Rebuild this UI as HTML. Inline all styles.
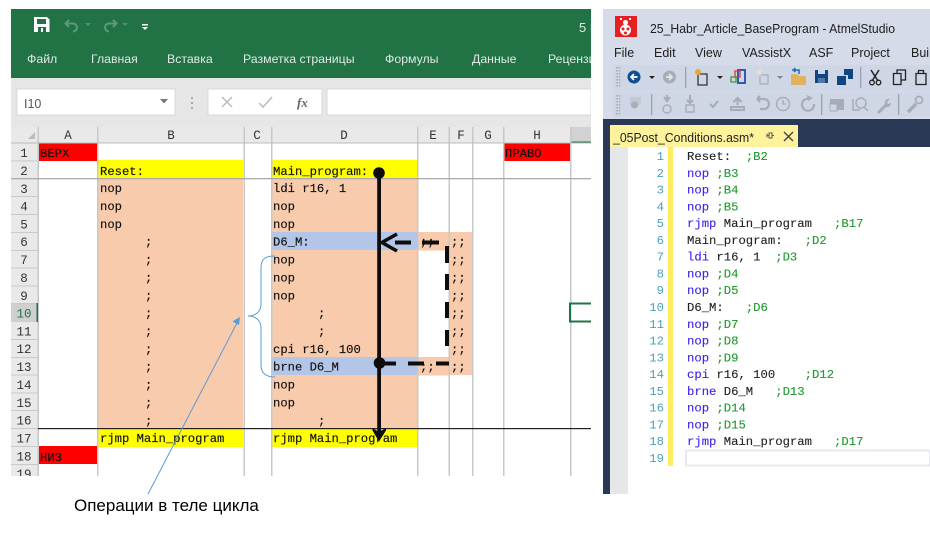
<!DOCTYPE html>
<html><head><meta charset="utf-8"><style>
html,body{margin:0;padding:0;background:#fff;width:930px;height:533px;overflow:hidden}
svg{display:block}
text{white-space:pre}
.m{font-family:"Liberation Mono",monospace;font-size:12.2px;fill:#111;stroke:#111;stroke-width:.15px}
.h{font-family:"Liberation Mono",monospace;font-size:12.5px;fill:#333;text-anchor:middle}
.tab{font-family:"Liberation Sans",sans-serif;font-size:12.3px;fill:#dfeae4}
.menu{font-family:"Liberation Sans",sans-serif;font-size:12.5px;fill:#1e1e1e}
.c{font-family:"Liberation Mono",monospace;font-size:12.25px;fill:#222;stroke:#222;stroke-width:.12px}
.k{fill:#3a22f0;stroke:#3a22f0}.g{fill:#1e9a2e;stroke:#1e9a2e}
.n{font-family:"Liberation Mono",monospace;font-size:12.25px;fill:#4a9fc0;text-anchor:end}
</style></head><body>
<svg width="930" height="533" viewBox="0 0 930 533" xmlns="http://www.w3.org/2000/svg">
<rect width="930" height="533" fill="#fff"/>
<!-- Excel chrome -->
<rect x="11" y="9" width="580" height="69" fill="#217346"/>
<rect x="11" y="78" width="580" height="49" fill="#e6e6e6"/>
<path d="M34 17h13l2.500 2.500v12.500h-15.500z" fill="#fff"/>
<rect x="37" y="19" width="9" height="5" fill="#217346"/><rect x="38" y="27" width="8" height="5" fill="#217346"/><rect x="41" y="28" width="2" height="4" fill="#fff"/>
<path d="M69 21l-3.500 3.500 3.500 3.500M66 24.500h7a4 4 0 0 1 0 8" fill="none" stroke="#5b9a7b" stroke-width="2" transform="translate(0,-1)"/>
<path d="M85 23l3 3 3-3z" fill="#4f9272"/>
<path d="M113 20l3.500 3.500-3.500 3.500M116 23.500h-7a4 4 0 0 0 0 8" fill="none" stroke="#5b9a7b" stroke-width="2"/>
<path d="M122 23l3 3 3-3z" fill="#4f9272"/>
<rect x="142" y="24" width="6" height="1.500" fill="#fff"/><path d="M142 27h6l-3 3z" fill="#fff"/>
<text class="tab" x="579" y="32" style="font-size:13px">5 П</text>
<text class="tab" x="27" y="63">Файл</text>
<text class="tab" x="91" y="63">Главная</text>
<text class="tab" x="167" y="63">Вставка</text>
<text class="tab" x="243" y="63">Разметка страницы</text>
<text class="tab" x="385" y="63">Формулы</text>
<text class="tab" x="472" y="63">Данные</text>
<text class="tab" x="548" y="63">Рецензирование</text>
<rect x="17" y="89" width="158" height="26" fill="#fff" stroke="#d8d8d8"/>
<text x="24" y="108" style="font-family:'Liberation Sans',sans-serif;font-size:12.5px;fill:#555">I10</text>
<path d="M160 99h8l-4 4.500z" fill="#777"/>
<rect x="191" y="97" width="2" height="2" fill="#aaa"/><rect x="191" y="102" width="2" height="2" fill="#aaa"/><rect x="191" y="107" width="2" height="2" fill="#aaa"/>
<rect x="208" y="89" width="114" height="26" fill="#fff" stroke="#d8d8d8"/>
<path d="M222 97l10 10M232 97l-10 10" stroke="#bbb" stroke-width="1.500" fill="none"/>
<path d="M259 103l4 4 9-10" stroke="#bbb" stroke-width="1.500" fill="none"/>
<text x="297" y="107" style="font-family:'Liberation Serif',serif;font-style:italic;font-weight:bold;font-size:13px;fill:#666">fx</text>
<rect x="327" y="89" width="264" height="26" fill="#fff" stroke="#d8d8d8"/>
<!-- Column header -->
<rect x="11" y="127" width="580" height="16" fill="#e9e9e9"/>
<rect x="570" y="127" width="21" height="15" fill="#d2d2d2"/><rect x="570" y="141.500" width="21" height="1.500" fill="#217346"/>
<path d="M35 139v-7l-7 7z" fill="#bdbdbd"/>
<rect x="11" y="143" width="27" height="333" fill="#e9e9e9"/>
<rect x="38" y="143" width="553" height="333" fill="#fff"/>
<!-- Fills -->
<rect x="38" y="143" width="59" height="18" fill="#f00"/>
<rect x="503.500" y="143" width="66.500" height="18" fill="#f00"/>
<rect x="38" y="446" width="59" height="18" fill="#f00"/>
<rect x="98" y="160" width="145" height="18.500" fill="#ff0"/>
<rect x="271.500" y="160" width="145.500" height="18.500" fill="#ff0"/>
<rect x="98" y="179" width="145" height="249" fill="#f8cbad"/>
<rect x="271.500" y="179" width="145.500" height="249" fill="#f8cbad"/>
<rect x="449" y="232" width="23" height="143" fill="#f8cbad"/>
<rect x="417.500" y="232" width="31.500" height="18.500" fill="#f8cbad"/>
<rect x="417.500" y="357" width="31.500" height="18.500" fill="#f8cbad"/>
<rect x="271.500" y="232" width="145.500" height="18" fill="#b4c6e7"/>
<rect x="271.500" y="357" width="145.500" height="18" fill="#b4c6e7"/>
<rect x="98" y="429" width="145" height="18" fill="#ff0"/>
<rect x="271.500" y="429" width="145.500" height="18" fill="#ff0"/>
<!-- Grid -->
<g fill="#c8c8c8">
<rect x="97" y="127" width="1.500" height="349"/><rect x="243.500" y="127" width="1.500" height="349"/><rect x="271" y="127" width="1.500" height="349"/><rect x="417" y="127" width="1.500" height="349"/><rect x="448.500" y="127" width="1.500" height="349"/><rect x="472" y="127" width="1.500" height="349"/><rect x="503" y="127" width="1.500" height="349"/><rect x="570" y="127" width="1.500" height="349"/>
<rect x="37.500" y="127" width="1.500" height="349"/>
</g>
<rect x="11" y="142.500" width="580" height="1" fill="#bbb"/>
<g fill="#c9c9c9"><rect x="11" y="160.400" width="27" height="1"/><rect x="11" y="196" width="27" height="1"/><rect x="11" y="214" width="27" height="1"/><rect x="11" y="232" width="27" height="1"/><rect x="11" y="250" width="27" height="1"/><rect x="11" y="267.500" width="27" height="1"/><rect x="11" y="285.500" width="27" height="1"/><rect x="11" y="303" width="27" height="1"/><rect x="11" y="321" width="27" height="1"/><rect x="11" y="339" width="27" height="1"/><rect x="11" y="357" width="27" height="1"/><rect x="11" y="374.500" width="27" height="1"/><rect x="11" y="392.500" width="27" height="1"/><rect x="11" y="410" width="27" height="1"/><rect x="11" y="446" width="27" height="1"/><rect x="11" y="464" width="27" height="1"/></g>
<rect x="11" y="178" width="580" height="1.300" fill="#aaa"/>
<rect x="38" y="428" width="553" height="1.200" fill="#222"/><rect x="11" y="428" width="27" height="1" fill="#c9c9c9"/>
<rect x="11" y="304" width="27" height="18" fill="#cfcfcf"/><rect x="36.500" y="303" width="1.500" height="19" fill="#217346"/>
<rect x="570" y="303.500" width="23" height="18" fill="none" stroke="#217346" stroke-width="2"/>
<!-- Headers text -->
<text class="h" x="68" y="139">A</text><text class="h" x="171" y="139">B</text><text class="h" x="257" y="139">C</text><text class="h" x="344" y="139">D</text><text class="h" x="433" y="139">E</text><text class="h" x="461" y="139">F</text><text class="h" x="488" y="139">G</text><text class="h" x="537" y="139">H</text>
<text class="h" x="24" y="157">1</text><text class="h" x="24" y="175">2</text><text class="h" x="24" y="193">3</text><text class="h" x="24" y="210.500">4</text><text class="h" x="24" y="228.500">5</text><text class="h" x="24" y="246">6</text><text class="h" x="24" y="264">7</text><text class="h" x="24" y="282">8</text><text class="h" x="24" y="300">9</text><text class="h" x="24" y="317.500" style="fill:#217346">10</text><text class="h" x="24" y="335.500">11</text><text class="h" x="24" y="353">12</text><text class="h" x="24" y="371">13</text><text class="h" x="24" y="389">14</text><text class="h" x="24" y="407">15</text><text class="h" x="24" y="424.500">16</text><text class="h" x="24" y="442.500">17</text><text class="h" x="24" y="460.500">18</text><text class="h" x="24" y="478">19</text>
<!-- Cells -->
<text class="m" x="40" y="157">ВЕРХ</text>
<text class="m" x="505" y="157">ПРАВО</text>
<text class="m" x="40" y="461">НИЗ</text>
<text class="m" x="100" y="175">Reset:</text>
<text class="m" x="273" y="175">Main_program:</text>
<text class="m" x="100" y="192.200">nop</text><text class="m" x="100" y="210">nop</text><text class="m" x="100" y="227.900">nop</text>
<text class="m" x="145" y="245.700">;</text><text class="m" x="145" y="263.600">;</text><text class="m" x="145" y="281.500">;</text><text class="m" x="145" y="299.300">;</text><text class="m" x="145" y="317.200">;</text><text class="m" x="145" y="335">;</text><text class="m" x="145" y="352.900">;</text><text class="m" x="145" y="370.700">;</text><text class="m" x="145" y="388.500">;</text><text class="m" x="145" y="406.400">;</text><text class="m" x="145" y="424.300">;</text>
<text class="m" x="100" y="442.100">rjmp Main_program</text>
<text class="m" x="273" y="192.200">ldi r16, 1</text><text class="m" x="273" y="210">nop</text><text class="m" x="273" y="227.900">nop</text>
<text class="m" x="273" y="245.700">D6_M:</text><text class="m" x="273" y="263.600">nop</text><text class="m" x="273" y="281.500">nop</text><text class="m" x="273" y="299.300">nop</text>
<text class="m" x="318" y="317.200">;</text><text class="m" x="318" y="335">;</text><text class="m" x="273" y="352.900">cpi r16, 100</text><text class="m" x="273" y="370.700">brne D6_M</text><text class="m" x="273" y="388.500">nop</text><text class="m" x="273" y="406.400">nop</text><text class="m" x="318" y="424.300">;</text>
<text class="m" x="273" y="442.100">rjmp Main_program</text>
<text class="m" x="420" y="245.700">;;</text><text class="m" x="420" y="370.700">;;</text>
<text class="m" x="451" y="245.700">;;</text><text class="m" x="451" y="263.600">;;</text><text class="m" x="451" y="281.500">;;</text><text class="m" x="451" y="299.300">;;</text><text class="m" x="451" y="317.200">;;</text><text class="m" x="451" y="335">;;</text><text class="m" x="451" y="352.900">;;</text><text class="m" x="451" y="370.700">;;</text>
<rect x="0" y="476" width="603" height="57" fill="#fff"/>
<rect x="591" y="0" width="12" height="533" fill="#fff"/>
<rect x="0" y="0" width="11" height="533" fill="#fff"/>
<!-- Flow arrows -->
<g fill="#0d0d0d">
<circle cx="379" cy="173" r="5.800"/><circle cx="379.500" cy="363" r="5.800"/>
<rect x="377.200" y="173" width="3.800" height="260"/>
<path d="M372.500 428l6.500 4 7-4v2.500l-7 11-6.500-11z"/>
<rect x="379" y="361.500" width="17" height="4"/><rect x="408" y="361.500" width="16" height="4"/><rect x="436" y="361.500" width="13" height="4"/>
<rect x="445" y="246" width="4" height="17"/><rect x="445" y="274" width="4" height="16"/><rect x="445" y="302" width="4" height="16"/><rect x="445" y="330" width="4" height="16"/>
<rect x="395" y="240.500" width="16" height="4"/><rect x="422" y="240.500" width="17" height="4"/>
</g>
<path d="M397 234l-15 8.500 15 8.500" fill="none" stroke="#0d0d0d" stroke-width="3.500"/>
<!-- Brace -->
<path d="M275 256c-9 0-14 2-14 12v36c0 8-6 12-13 12 7 0 13 4 13 12v37c0 8 5 12 14 12" fill="none" stroke="#5b9bd5" stroke-width="1"/>
<!-- Callout -->
<path d="M148 494L237 323" stroke="#5b9bd5" stroke-width="1" fill="none"/>
<path d="M240 317l-7.500 4.500 6.500 3.500z" fill="#5b9bd5"/>
<text x="74" y="511" style="font-family:'Liberation Sans',sans-serif;font-size:17px;fill:#000">Операции в теле цикла</text>
<!-- Studio -->
<rect x="603" y="9" width="327" height="110" fill="#d6dbe9"/>
<rect x="603" y="119" width="327" height="375" fill="#293955"/>
<rect x="610" y="147" width="320" height="347" fill="#fff"/>
<rect x="610" y="147" width="18" height="347" fill="#e6e7e8"/>
<rect x="610" y="125" width="188" height="22" fill="#fff29d"/>
<rect x="668" y="147" width="5" height="319" fill="#ffee62"/>
<rect x="686" y="450.500" width="244" height="15" fill="#fff" stroke="#e8e8f2" stroke-width="2"/>
<!-- logo -->
<rect x="615" y="16" width="22" height="21" fill="#e62020"/>
<circle cx="625.500" cy="30" r="5.500" fill="#fff"/><circle cx="625.500" cy="22.500" r="2.500" fill="#fff"/>
<circle cx="623" cy="29" r="1.500" fill="#e62020"/><circle cx="628" cy="29" r="1.500" fill="#e62020"/><circle cx="625.500" cy="33" r="1.500" fill="#e62020"/>
<rect x="620" y="18" width="2" height="2" fill="#fff"/><rect x="629" y="18" width="2" height="2" fill="#fff"/>
<text x="650" y="33" style="font-family:'Liberation Sans',sans-serif;font-size:12.600px;fill:#1e1e1e" textLength="245" lengthAdjust="spacingAndGlyphs">25_Habr_Article_BaseProgram - AtmelStudio</text>
<text class="menu" x="614" y="57">File</text><text class="menu" x="654" y="57">Edit</text><text class="menu" x="695" y="57">View</text><text class="menu" x="742" y="57">VAssistX</text><text class="menu" x="809" y="57">ASF</text><text class="menu" x="851" y="57">Project</text><text class="menu" x="911" y="57">Build</text>
<!-- toolbars -->
<rect x="613" y="65" width="317" height="26" fill="#cfd6e5"/>
<rect x="613" y="92" width="317" height="25" fill="#cfd6e5"/>
<path d="M617 67v21M619.500 67v21M617 95v20M619.500 95v20" stroke="#a3abb9" stroke-width="1.500" stroke-dasharray="1.500 1.500" fill="none"/>
<circle cx="634" cy="77" r="6.500" fill="#0e4f94"/><path d="M637.500 77h-6M634 74l-3 3 3 3" stroke="#fff" stroke-width="1.700" fill="none"/>
<path d="M649 76h6l-3 3z" fill="#222"/>
<circle cx="669.500" cy="77" r="6.500" fill="#a9adb6"/><path d="M666 77h6M669 74l3 3-3 3" stroke="#e4e6ec" stroke-width="1.700" fill="none"/>
<rect x="685" y="67" width="1.300" height="21" fill="#9aa2b0"/>
<path d="M698 74h9v11h-9z" fill="none" stroke="#333" stroke-width="1.300"/><circle cx="698" cy="72" r="3" fill="#e7a83a"/>
<path d="M717 76h6l-3 3z" fill="#222"/>
<rect x="737" y="69" width="9" height="15" fill="#2f5da8"/><rect x="739" y="71" width="5" height="11" fill="#cdd8ee"/><rect x="735" y="71" width="5" height="6" fill="none" stroke="#d83a3a" stroke-width="1.300"/><rect x="731" y="77" width="5" height="5" fill="none" stroke="#3f9a3f" stroke-width="1.300"/>
<path d="M761 75h7v9h-8v-8" fill="none" stroke="#a8aeb9" stroke-width="1.300"/><circle cx="759" cy="72" r="2.500" fill="#e6e0cd"/>
<path d="M777 76h6l-3 3z" fill="#7e8492"/>
<path d="M791 74h6l2 2h7v9h-15z" fill="#e0b35c"/><path d="M792 70h4l-2-2m2 2l-2 2M797 70h2v4" stroke="#1c6cb5" stroke-width="1.500" fill="none"/>
<path d="M815 70h13v13h-13z" fill="#0e4583"/><rect x="818" y="70" width="7" height="4" fill="#cfd6e5"/><rect x="818" y="78" width="7" height="5" fill="#cfd6e5" opacity=".35"/>
<path d="M837 76h9v9h-9z" fill="#0e4583"/><path d="M844 69h9v10h-5v-4h-4z" fill="#0e4583"/>
<rect x="860" y="67" width="1.300" height="21" fill="#9aa2b0"/>
<path d="M871 70l7 11M879 70l-7 11" stroke="#222" stroke-width="1.500" fill="none"/><circle cx="872" cy="82.500" r="2.300" fill="none" stroke="#222" stroke-width="1.300"/><circle cx="878.500" cy="82.500" r="2.300" fill="none" stroke="#222" stroke-width="1.300"/>
<path d="M893.500 73.500h7.500v11h-7.500zM897 73v-3h8.500v10h-4.500" fill="none" stroke="#222" stroke-width="1.300"/>
<path d="M916 73.500h10v11h-10zM918.500 73.500v-3h5v3" fill="none" stroke="#222" stroke-width="1.300"/>
<!-- toolbar 2 -->
<rect x="630" y="97" width="11" height="8" fill="#c3c8d2"/><circle cx="634.500" cy="105" r="3.500" fill="#a9adb6"/>
<rect x="651" y="94" width="1.300" height="21" fill="#9aa2b0"/>
<circle cx="667" cy="109" r="4" fill="none" stroke="#a7acb6" stroke-width="1.400"/><path d="M664 97l3 4 3-4M667 95v7" stroke="#a7acb6" stroke-width="2" fill="none"/>
<rect x="686" y="105" width="8" height="7" fill="none" stroke="#a7acb6" stroke-width="1.400"/><path d="M690 95v7M687 100l3 3 3-3" stroke="#a7acb6" stroke-width="2" fill="none"/>
<path d="M710 104l3 3 5-6" stroke="#a7acb6" stroke-width="2" fill="none"/>
<path d="M731 110h13v-3h-13zM737.500 97v8M733.500 102l4-4 4 4" stroke="#a7acb6" stroke-width="2" fill="none"/>
<path d="M757 99h7a5 5 0 0 1 0 10h-4M757 99l3-3M757 99l3 3" stroke="#a7acb6" stroke-width="2.200" fill="none"/>
<circle cx="783" cy="104" r="6.500" fill="none" stroke="#a7acb6" stroke-width="1.400"/><path d="M783 100v4h3" stroke="#a7acb6" stroke-width="1.300" fill="none"/>
<path d="M810 99a6 6 0 1 0 4 5" stroke="#a7acb6" stroke-width="2.200" fill="none"/><path d="M807 95l6 3-5 3z" fill="#a7acb6"/>
<rect x="821" y="94" width="1.300" height="21" fill="#9aa2b0"/>
<path d="M830 99h14v11h-14z" fill="#a7acb6"/><rect x="830" y="104" width="7" height="7" fill="#cfd6e5" stroke="#a7acb6"/>
<circle cx="861" cy="103" r="5" fill="none" stroke="#a7acb6" stroke-width="1.400"/><path d="M864 107l4 4M853 99v11h7" stroke="#a7acb6" stroke-width="1.500" fill="none"/>
<path d="M877 112l8-8a4 4 0 0 1 5-5l-3 3 1 2 3-1a4 4 0 0 1-5 4l-7 7z" fill="#a7acb6"/>
<rect x="898" y="94" width="1.300" height="21" fill="#9aa2b0"/>
<path d="M908 112l8-8" stroke="#a7acb6" stroke-width="3.500"/><circle cx="919" cy="100" r="3.500" fill="none" stroke="#a7acb6" stroke-width="1.800"/>
<!-- tab -->
<text x="613" y="142" style="font-family:'Liberation Sans',sans-serif;font-size:12.500px;fill:#222" textLength="141" lengthAdjust="spacingAndGlyphs">_05Post_Conditions.asm*</text>
<path d="M767 133.500v4M767 135.500h2M769 133v5h3v-5zM772 135.500h2" stroke="#555" stroke-width="1" fill="none"/>
<path d="M784 132l9 9M793 132l-9 9" stroke="#444" stroke-width="1.400" fill="none"/>
<!-- code -->
<text class="n" x="664" y="160">1</text><text class="n" x="664" y="176.800">2</text><text class="n" x="664" y="193.600">3</text><text class="n" x="664" y="210.300">4</text><text class="n" x="664" y="227.100">5</text><text class="n" x="664" y="243.900">6</text><text class="n" x="664" y="260.700">7</text><text class="n" x="664" y="277.500">8</text><text class="n" x="664" y="294.200">9</text><text class="n" x="664" y="311">10</text><text class="n" x="664" y="327.800">11</text><text class="n" x="664" y="344.600">12</text><text class="n" x="664" y="361.400">13</text><text class="n" x="664" y="378.100">14</text><text class="n" x="664" y="394.900">15</text><text class="n" x="664" y="411.700">16</text><text class="n" x="664" y="428.500">17</text><text class="n" x="664" y="445.200">18</text><text class="n" x="664" y="462">19</text>
<text class="c" x="687" y="160">Reset:  <tspan class="g">;B2</tspan></text>
<text class="c" x="687" y="176.800"><tspan class="k">nop</tspan> <tspan class="g">;B3</tspan></text>
<text class="c" x="687" y="193.600"><tspan class="k">nop</tspan> <tspan class="g">;B4</tspan></text>
<text class="c" x="687" y="210.300"><tspan class="k">nop</tspan> <tspan class="g">;B5</tspan></text>
<text class="c" x="687" y="227.100"><tspan class="k">rjmp</tspan> Main_program   <tspan class="g">;B17</tspan></text>
<text class="c" x="687" y="243.900">Main_program:   <tspan class="g">;D2</tspan></text>
<text class="c" x="687" y="260.700"><tspan class="k">ldi</tspan> r16, 1  <tspan class="g">;D3</tspan></text>
<text class="c" x="687" y="277.500"><tspan class="k">nop</tspan> <tspan class="g">;D4</tspan></text>
<text class="c" x="687" y="294.200"><tspan class="k">nop</tspan> <tspan class="g">;D5</tspan></text>
<text class="c" x="687" y="311">D6_M:   <tspan class="g">;D6</tspan></text>
<text class="c" x="687" y="327.800"><tspan class="k">nop</tspan> <tspan class="g">;D7</tspan></text>
<text class="c" x="687" y="344.600"><tspan class="k">nop</tspan> <tspan class="g">;D8</tspan></text>
<text class="c" x="687" y="361.400"><tspan class="k">nop</tspan> <tspan class="g">;D9</tspan></text>
<text class="c" x="687" y="378.100"><tspan class="k">cpi</tspan> r16, 100    <tspan class="g">;D12</tspan></text>
<text class="c" x="687" y="394.900"><tspan class="k">brne</tspan> D6_M   <tspan class="g">;D13</tspan></text>
<text class="c" x="687" y="411.700"><tspan class="k">nop</tspan> <tspan class="g">;D14</tspan></text>
<text class="c" x="687" y="428.500"><tspan class="k">nop</tspan> <tspan class="g">;D15</tspan></text>
<text class="c" x="687" y="445.200"><tspan class="k">rjmp</tspan> Main_program   <tspan class="g">;D17</tspan></text>
</svg>
</body></html>
